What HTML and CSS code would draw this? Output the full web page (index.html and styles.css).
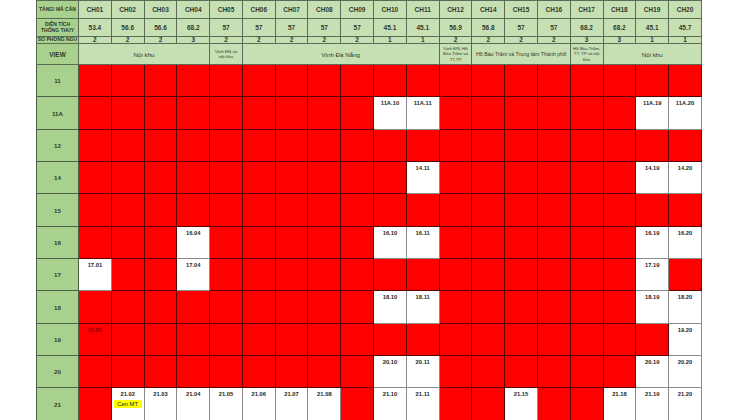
FILE: index.html
```html
<!DOCTYPE html>
<html lang="vi">
<head>
<meta charset="utf-8">
<title>Bảng căn hộ</title>
<link rel="stylesheet" href="styles.css">
</head>
<body>
<div class="wrap">
<table class="grid">
<colgroup><col class="c-label"><col span="19"></colgroup>
<tr class="h1">
<th class="lab small">TẦNG/ MÃ CĂN</th>
<th>CH01</th><th>CH02</th><th>CH03</th><th>CH04</th><th>CH05</th><th>CH06</th><th>CH07</th><th>CH08</th><th>CH09</th><th>CH10</th><th>CH11</th><th>CH12</th><th>CH14</th><th>CH15</th><th>CH16</th><th>CH17</th><th>CH18</th><th>CH19</th><th>CH20</th>
</tr>
<tr class="h2">
<th class="lab small">DIỆN TÍCH<br>THÔNG THỦY</th>
<th>53.4</th><th>56.6</th><th>56.6</th><th>68.2</th><th>57</th><th>57</th><th>57</th><th>57</th><th>57</th><th>45.1</th><th>45.1</th><th>56.9</th><th>56.8</th><th>57</th><th>57</th><th>68.2</th><th>68.2</th><th>45.1</th><th>45.7</th>
</tr>
<tr class="h3">
<th class="lab small">SỐ PHÒNG NGỦ</th>
<th>2</th><th>2</th><th>2</th><th>3</th><th>2</th><th>2</th><th>2</th><th>2</th><th>2</th><th>1</th><th>1</th><th>2</th><th>2</th><th>2</th><th>2</th><th>3</th><th>3</th><th>1</th><th>1</th>
</tr>
<tr class="h4">
<th class="lab">VIEW</th>
<th colspan="4">Nội khu</th>
<th class="tiny">Vịnh ĐN và nội khu</th>
<th colspan="6">Vịnh Đà Nẵng</th>
<th class="tiny">Vịnh ĐN, Hồ Bàu Trăm và TT.TP</th>
<th colspan="3" class="mid">Hồ Bàu Trăm và Trung tâm Thành phố</th>
<th class="tiny">Hồ Bàu Trăm, TT, TP và nội khu</th>
<th colspan="3">Nội khu</th>
</tr>
<tr class="fl"><th class="lab">11</th><td class="r"></td><td class="r"></td><td class="r"></td><td class="r"></td><td class="r"></td><td class="r"></td><td class="r"></td><td class="r"></td><td class="r"></td><td class="r"></td><td class="r"></td><td class="r"></td><td class="r"></td><td class="r"></td><td class="r"></td><td class="r"></td><td class="r"></td><td class="r"></td><td class="r"></td></tr>
<tr class="fl"><th class="lab">11A</th><td class="r"></td><td class="r"></td><td class="r"></td><td class="r"></td><td class="r"></td><td class="r"></td><td class="r"></td><td class="r"></td><td class="r"></td><td class="w">11A.10</td><td class="w">11A.11</td><td class="r"></td><td class="r"></td><td class="r"></td><td class="r"></td><td class="r"></td><td class="r"></td><td class="w">11A.19</td><td class="w">11A.20</td></tr>
<tr class="fl"><th class="lab">12</th><td class="r"></td><td class="r"></td><td class="r"></td><td class="r"></td><td class="r"></td><td class="r"></td><td class="r"></td><td class="r"></td><td class="r"></td><td class="r"></td><td class="r"></td><td class="r"></td><td class="r"></td><td class="r"></td><td class="r"></td><td class="r"></td><td class="r"></td><td class="r"></td><td class="r"></td></tr>
<tr class="fl"><th class="lab">14</th><td class="r"></td><td class="r"></td><td class="r"></td><td class="r"></td><td class="r"></td><td class="r"></td><td class="r"></td><td class="r"></td><td class="r"></td><td class="r"></td><td class="w">14.11</td><td class="r"></td><td class="r"></td><td class="r"></td><td class="r"></td><td class="r"></td><td class="r"></td><td class="w">14.19</td><td class="w">14.20</td></tr>
<tr class="fl"><th class="lab">15</th><td class="r"></td><td class="r"></td><td class="r"></td><td class="r"></td><td class="r"></td><td class="r"></td><td class="r"></td><td class="r"></td><td class="r"></td><td class="r"></td><td class="r"></td><td class="r"></td><td class="r"></td><td class="r"></td><td class="r"></td><td class="r"></td><td class="r"></td><td class="r"></td><td class="r"></td></tr>
<tr class="fl"><th class="lab">16</th><td class="r"></td><td class="r"></td><td class="r"></td><td class="w">16.04</td><td class="r"></td><td class="r"></td><td class="r"></td><td class="r"></td><td class="r"></td><td class="w">16.10</td><td class="w">16.11</td><td class="r"></td><td class="r"></td><td class="r"></td><td class="r"></td><td class="r"></td><td class="r"></td><td class="w">16.19</td><td class="w">16.20</td></tr>
<tr class="fl"><th class="lab">17</th><td class="w">17.01</td><td class="r"></td><td class="r"></td><td class="w">17.04</td><td class="r"></td><td class="r"></td><td class="r"></td><td class="r"></td><td class="r"></td><td class="r"></td><td class="r"></td><td class="r"></td><td class="r"></td><td class="r"></td><td class="r"></td><td class="r"></td><td class="r"></td><td class="w">17.19</td><td class="r"></td></tr>
<tr class="fl"><th class="lab">18</th><td class="r"></td><td class="r"></td><td class="r"></td><td class="r"></td><td class="r"></td><td class="r"></td><td class="r"></td><td class="r"></td><td class="r"></td><td class="w">18.10</td><td class="w">18.11</td><td class="r"></td><td class="r"></td><td class="r"></td><td class="r"></td><td class="r"></td><td class="r"></td><td class="w">18.19</td><td class="w">18.20</td></tr>
<tr class="fl"><th class="lab">19</th><td class="r sold">19.01</td><td class="r"></td><td class="r"></td><td class="r"></td><td class="r"></td><td class="r"></td><td class="r"></td><td class="r"></td><td class="r"></td><td class="r"></td><td class="r"></td><td class="r"></td><td class="r"></td><td class="r"></td><td class="r"></td><td class="r"></td><td class="r"></td><td class="r"></td><td class="w">19.20</td></tr>
<tr class="fl"><th class="lab">20</th><td class="r"></td><td class="r"></td><td class="r"></td><td class="r"></td><td class="r"></td><td class="r"></td><td class="r"></td><td class="r"></td><td class="r"></td><td class="w">20.10</td><td class="w">20.11</td><td class="r"></td><td class="r"></td><td class="r"></td><td class="r"></td><td class="r"></td><td class="r"></td><td class="w">20.19</td><td class="w">20.20</td></tr>
<tr class="fl last"><th class="lab">21</th><td class="r"></td><td class="w">21.02<span class="tag">Cen MT</span></td><td class="w">21.03</td><td class="w">21.04</td><td class="w">21.05</td><td class="w">21.06</td><td class="w">21.07</td><td class="w">21.08</td><td class="r"></td><td class="w">21.10</td><td class="w">21.11</td><td class="r"></td><td class="r"></td><td class="w">21.15</td><td class="r"></td><td class="r"></td><td class="w">21.18</td><td class="w">21.19</td><td class="w">21.20</td></tr>
</table>
</div>
</body>
</html>
```

FILE: styles.css
```css
html, body {
  margin: 0;
  padding: 0;
  background: #ffffff;
}
.wrap {
  padding-left: 36px;
  height: 420px;
  overflow: hidden;
}
.grid {
  width: 666px;
  table-layout: fixed;
  border-collapse: collapse;
  font-family: "Liberation Sans", Arial, sans-serif;
  font-weight: bold;
  color: #2a2a2a;
}
.c-label { width: 42px; }
.grid th, .grid td {
  padding: 0;
  text-align: center;
  overflow: hidden;
  white-space: nowrap;
}
.grid th {
  background: #c6e0b4;
  border: 1px solid #5b6b55;
  font-size: 6.5px;
  line-height: 7px;
  color: #2f3a2c;
  font-weight: bold;
  vertical-align: middle;
}
.grid th.lab {
  background: #a9d18e;
  color: #2c3a28;
}
.grid th.small {
  font-size: 5px;
  line-height: 5.5px;
}
.grid th.tiny {
  font-size: 4.4px;
  line-height: 5.2px;
  white-space: normal;
  font-weight: normal;
  padding: 0 2px;
}
.grid th.mid {
  font-size: 5.3px;
  font-weight: normal;
}
.h1 { height: 18px; }
.h2 { height: 18px; }
.h3 { height: 7px; }
.h3 th { line-height: 6px; }
.h4 { height: 21px; }
.h4 th { font-weight: normal; font-size: 6.2px; }
.h4 th.lab { font-weight: bold; font-size: 6.5px; }
.fl { height: 32.35px; }
.fl th.lab {
  font-size: 6.2px;
  border-color: #4e5e48;
}
.grid td {
  vertical-align: top;
  font-size: 5.8px;
  line-height: 6px;
  padding-top: 3px;
  color: #1e1e1e;
}
.grid td.r {
  background: #ff0000;
  border: 1px solid #5c0000;
}
.grid td.w {
  background: #ffffff;
  border: 1px solid #8a8a8a;
}
.grid td.sold {
  color: #8a0000;
}
.tag {
  display: block;
  width: 28px;
  margin: 3px auto 0 auto;
  background: #ffff00;
  font-weight: normal;
  font-size: 5.8px;
  line-height: 8px;
  color: #222;
}
```
